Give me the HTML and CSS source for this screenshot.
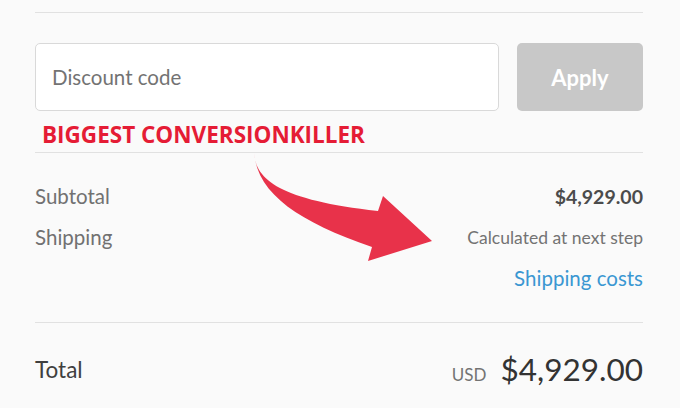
FILE: index.html
```html
<!DOCTYPE html>
<html>
<head>
<meta charset="utf-8">
<link rel="stylesheet" href="styles.css">
</head>
<body>
<div class="summary">
  <div class="rule top-rule"></div>
  <div class="discount">
    <div class="input">Discount code</div>
    <div class="apply">Apply</div>
  </div>
  <div class="killer">BIGGEST CONVERSIONKILLER</div>
  <div class="rule"></div>
  <div class="lines">
    <div class="row"><span class="label">Subtotal</span><span class="amount">$4,929.00</span></div>
    <div class="row"><span class="label">Shipping</span><span class="note">Calculated at next step</span></div>
    <div class="row link-row"><span class="link">Shipping costs</span></div>
  </div>
  <div class="rule"></div>
  <div class="total">
    <span class="label total-label">Total</span>
    <span class="total-amount"><span class="currency">USD</span><span class="big">$4,929.00</span></span>
  </div>
  <svg class="arrow" width="680" height="408" viewBox="0 0 680 408">
    <path d="M254 153 C 256 180, 280 200, 378 211 L 383 196 L 432 241 L 368 261 L 372 247 C 300 222, 258 195, 254 153 Z" fill="#e8324a"/>
  </svg>
</div>
</body>
</html>
```
FILE: styles.css
```css
html, body {
  margin: 0;
  padding: 0;
  background: #fafafa;
}
body {
  width: 680px;
  height: 408px;
  overflow: hidden;
  font-family: Lato, "Open Sans", sans-serif;
}
.summary {
  position: relative;
  height: 408px;
  padding: 12px 37px 0 35px;
  box-sizing: border-box;
  display: flex;
  flex-direction: column;
}
.rule {
  height: 1px;
  background: #e1e1e1;
}
.discount {
  display: flex;
  gap: 18px;
  margin-top: 30px;
  height: 68px;
}
.input {
  flex: 1;
  background: #fff;
  border: 1px solid #d9d9d9;
  border-radius: 5px;
  display: flex;
  align-items: center;
  padding-left: 16px;
  font-size: 20.5px;
  color: #737373;
}
.apply {
  width: 126px;
  background: #c8c8c8;
  border-radius: 5px;
  color: #fff;
  font-weight: 700;
  font-size: 22px;
  display: flex;
  align-items: center;
  justify-content: center;
}
.killer {
  margin: 9px 0 0 7px;
  height: 32px;
  font-family: "Open Sans", sans-serif;
  font-weight: 700;
  font-size: 22.5px;
  line-height: 30px;
  color: #e51c35;
}
.lines {
  display: flex;
  flex-direction: column;
  margin-top: 32px;
  gap: 19px;
}
.row {
  display: flex;
  justify-content: space-between;
  align-items: center;
  height: 22px;
}
.link-row {
  justify-content: flex-end;
}
.label {
  font-size: 20.5px;
  color: #717171;
}
.amount {
  font-size: 19.5px;
  font-weight: 700;
  color: #4b4b4b;
}
.note {
  font-size: 17.5px;
  color: #737373;
}
.link {
  font-size: 20.5px;
  color: #3a97d2;
}
.lines + .rule {
  margin-top: 33px;
}
.total {
  display: flex;
  justify-content: space-between;
  align-items: center;
  margin-top: 26px;
  height: 40px;
}
.total-label {
  font-size: 22.5px;
  color: #3f3f3f;
}
.total-amount {
  display: flex;
  align-items: baseline;
  gap: 14px;
}
.currency {
  font-size: 17px;
  color: #737373;
}
.big {
  font-size: 31.5px;
  color: #333;
}
.arrow {
  position: absolute;
  left: 0;
  top: 0;
  pointer-events: none;
}
```
